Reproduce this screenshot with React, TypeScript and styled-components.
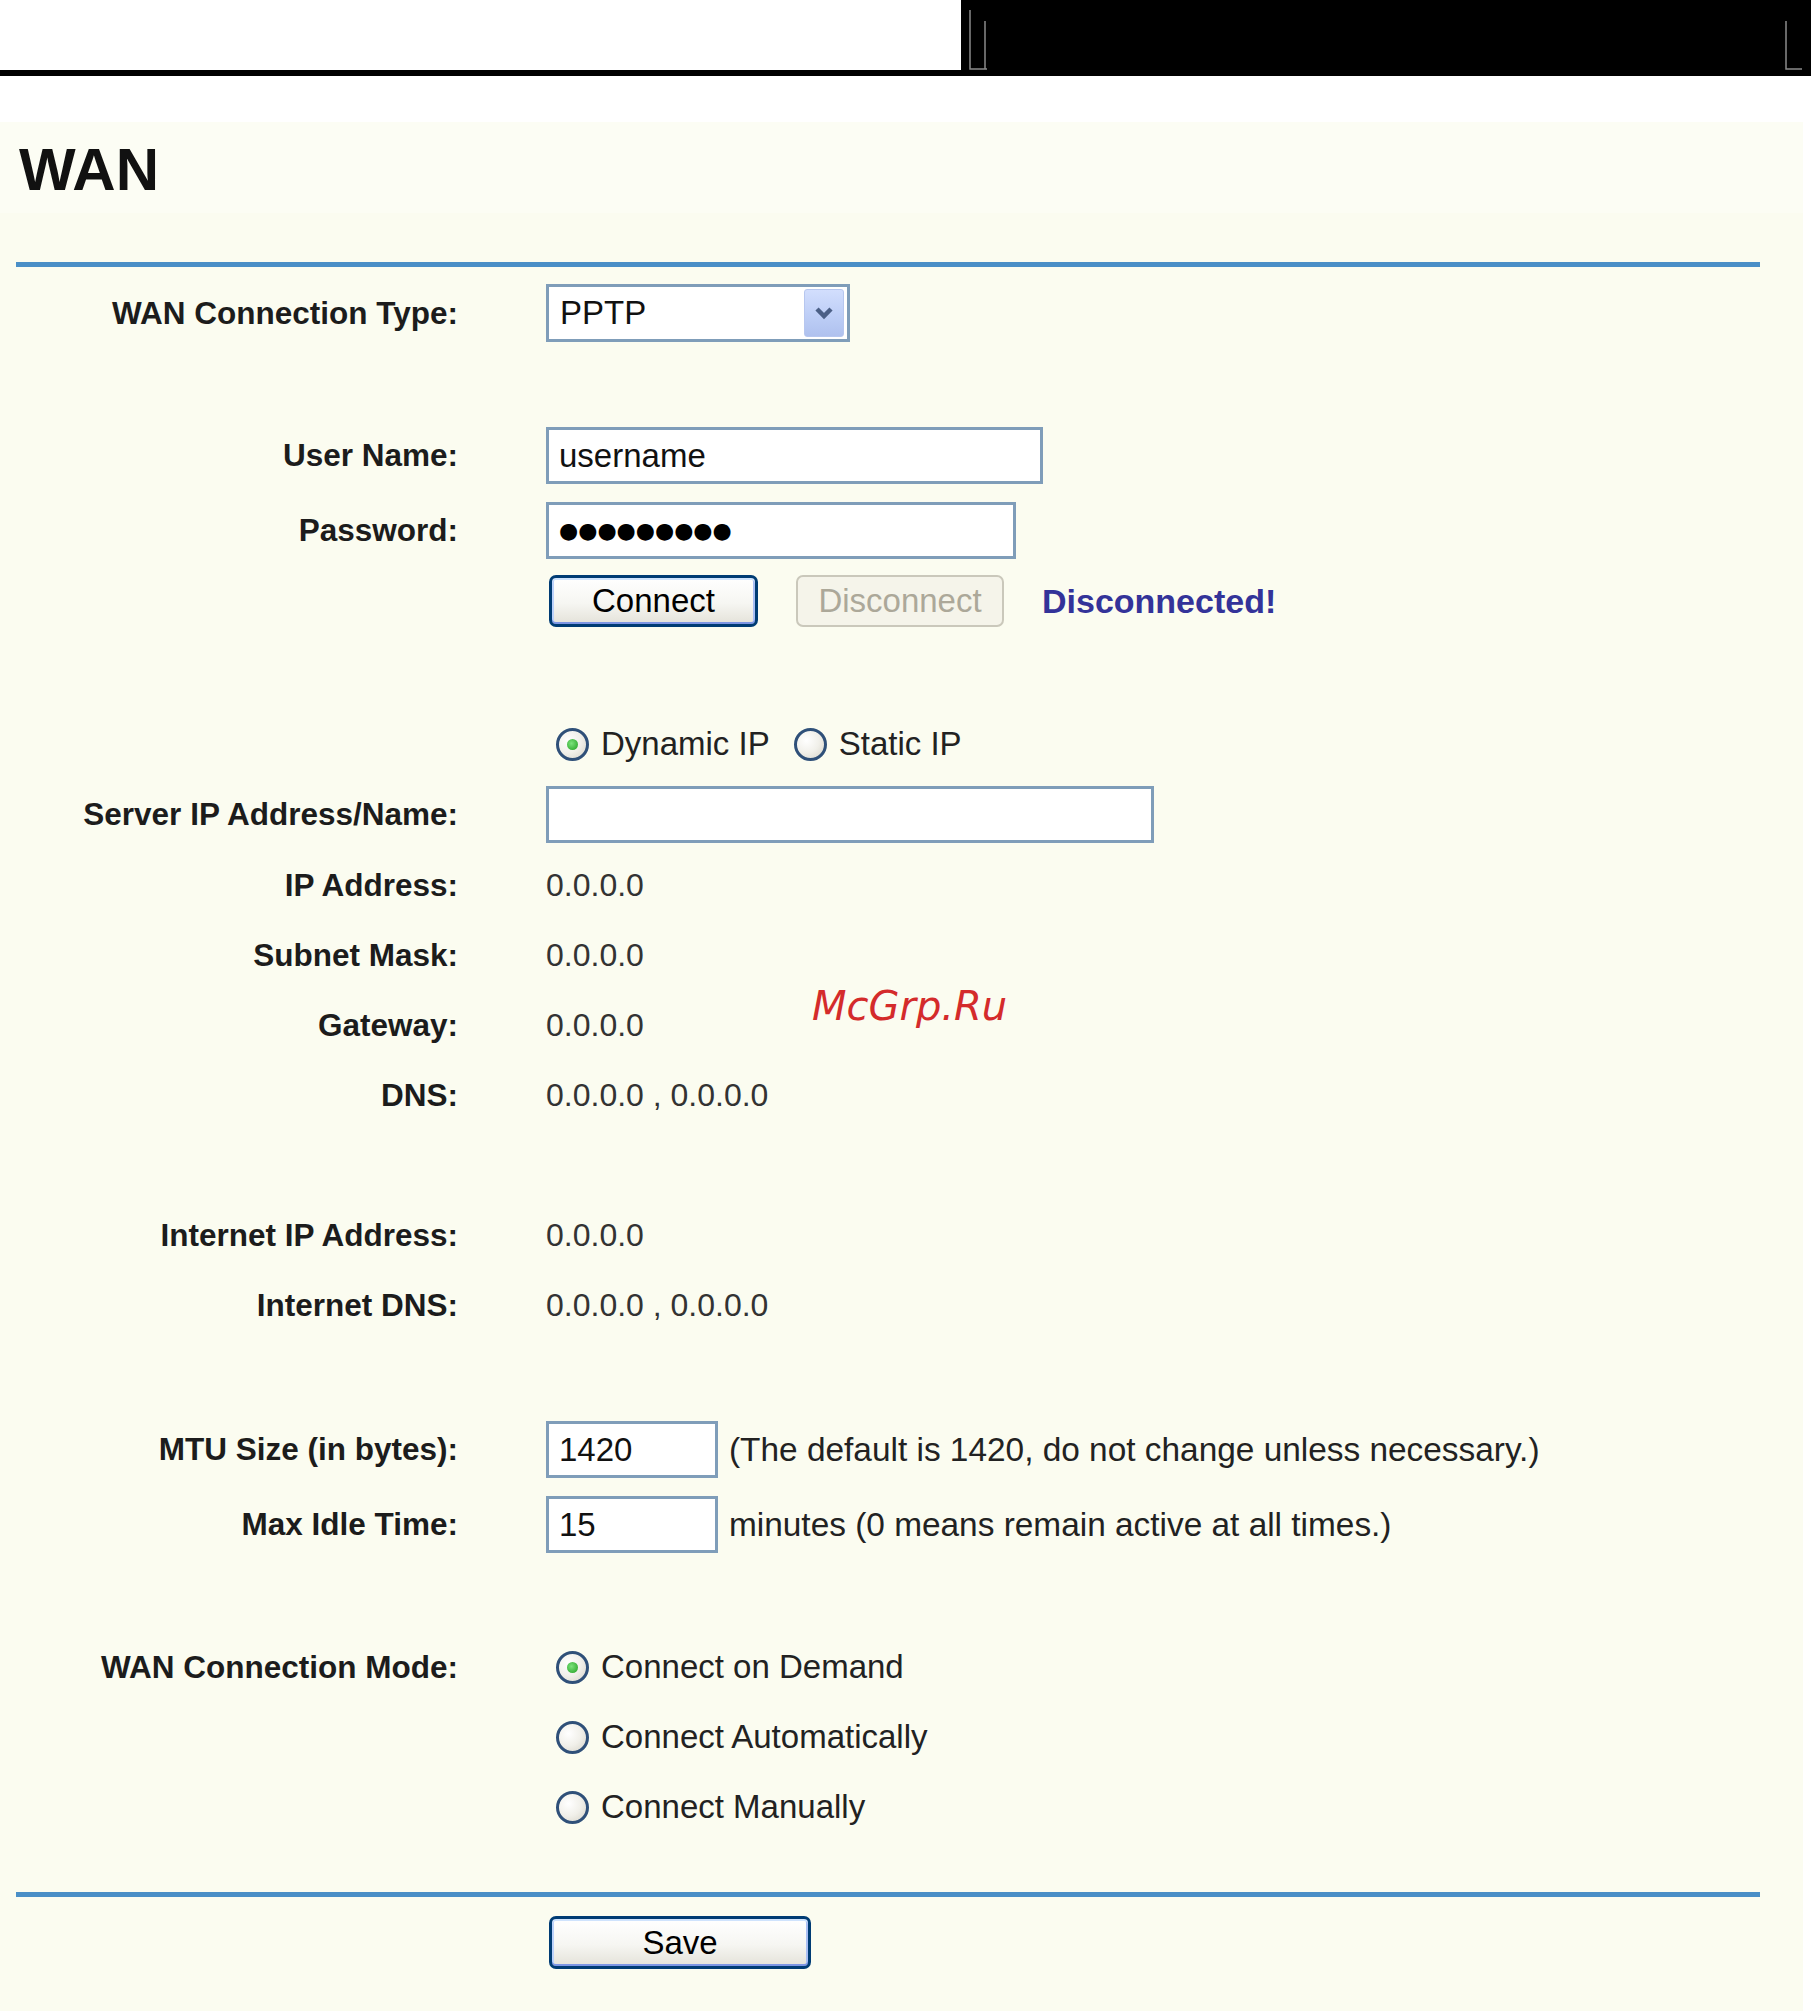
import styled, { createGlobalStyle, css } from 'styled-components';

const GlobalStyle = createGlobalStyle`
  html, body { margin: 0; padding: 0; background: #fff; }
  body { font-family: "Liberation Sans", Arial, sans-serif; }
`;

const Page = styled.div`
  position: relative;
  width: 1811px;
  min-height: 2011px;
  background: #fff;
  overflow: hidden;
`;

const Header = styled.header`
  display: flex;
  height: 70px;
  border-bottom: 6px solid #000;
`;

const HeaderBlank = styled.div`
  width: 961px;
  background: #fff;
`;

const HeaderBlack = styled.div`
  flex: 1;
  background: #000;
  svg { display: block; }
`;

const Panel = styled.main`
  width: 1803px;
  margin-top: 46px;
  background: #fbfcf0;
  padding-bottom: 60px;
`;

const TitleBar = styled.div`
  box-sizing: border-box;
  height: 91px;
  padding: 5px 0 0 19px;
  background: #fcfdf4;
`;

const Title = styled.h1`
  margin: 0;
  font: bold 60px/86px "Liberation Sans", Arial, sans-serif;
  color: #111;
`;

const Divider = styled.div<{ $top: number }>`
  margin: ${p => p.$top}px 0 0 16px;
  width: 1744px;
  height: 5px;
  background: #4a8fc7;
`;

const Spacer = styled.div<{ $h: number }>`
  height: ${p => p.$h}px;
`;

const Row = styled.div<{ $h: number }>`
  display: grid;
  grid-template-columns: 458px 1fr;
  column-gap: 88px;
  align-items: center;
  height: ${p => p.$h}px;
`;

const Label = styled.div`
  text-align: right;
  font: bold 31.5px "Liberation Sans", Arial, sans-serif;
  color: #1c1c1c;
  white-space: nowrap;
`;

const Cell = styled.div`
  display: flex;
  align-items: center;
  white-space: nowrap;
`;

const Value = styled.span`
  font-size: 32px;
  color: #333;
`;

const fieldCss = css`
  box-sizing: border-box;
  height: 57px;
  margin: 0;
  border: 3px solid #7f9db9;
  background: #fff;
  padding: 0 10px;
  font: 33px "Liberation Sans", Arial, sans-serif;
  color: #111;
  outline: none;
`;

const TextBox = styled.input<{ $w: number }>`
  ${fieldCss};
  width: ${p => p.$w}px;
`;

const PasswordBox = styled.div<{ $w: number }>`
  ${fieldCss};
  width: ${p => p.$w}px;
  display: flex;
  align-items: center;
  font: 22px "DejaVu Sans", sans-serif;
  color: #000;
`;

const SelectBox = styled.div`
  box-sizing: border-box;
  width: 304px;
  height: 58px;
  border: 3px solid #7f9db9;
  background: #fff;
  display: flex;
  align-items: center;
  justify-content: space-between;
  padding: 0 3px 0 11px;
  font: 33px "Liberation Sans", Arial, sans-serif;
  color: #111;
`;

const SelectArrow = styled.span`
  box-sizing: border-box;
  width: 40px;
  height: 48px;
  border-radius: 3px;
  border: 1px solid #b7c7ef;
  background: linear-gradient(180deg, #d2defd 0%, #bccdf6 60%, #afc1ee 100%);
  display: flex;
  align-items: center;
  justify-content: center;
`;

const Button = styled.button<{ $w: number; $h: number }>`
  box-sizing: border-box;
  width: ${p => p.$w}px;
  height: ${p => p.$h}px;
  margin: 0;
  padding: 0;
  border: 3px solid #003c74;
  border-radius: 7px;
  background: linear-gradient(180deg, #ffffff 0%, #f6f6f2 55%, #e4e2d9 100%);
  box-shadow: inset 0 2px 0 #cfe3fd, inset 0 -2px 0 #7d96e4, inset 2px 0 0 #bcd2fb, inset -2px 0 0 #a9bff4;
  font: 33px "Liberation Sans", Arial, sans-serif;
  color: #000;
  cursor: pointer;

  &:disabled {
    border: 2px solid #cac8bb;
    background: #f5f4ea;
    box-shadow: none;
    color: #aca899;
    cursor: default;
  }
`;

const ButtonRow = styled(Cell)`
  gap: 38px;
  padding-left: 3px;
`;

const Status = styled.span`
  font: bold 34px "Liberation Sans", Arial, sans-serif;
  color: #333399;
`;

const RadioGroup = styled.div<{ $gap: number }>`
  display: flex;
  align-items: center;
  gap: ${p => p.$gap}px;
  padding-left: 10px;
`;

const RadioItem = styled.label`
  display: flex;
  align-items: center;
  gap: 12px;
  font-size: 33px;
  color: #222;
  white-space: nowrap;
`;

const RadioDot = styled.span<{ $on?: boolean }>`
  box-sizing: border-box;
  flex: none;
  width: 33px;
  height: 33px;
  border-radius: 50%;
  border: 3px solid #2f5079;
  background: radial-gradient(circle at 35% 35%, #ffffff 0%, #f1f0ea 50%, #d6d3c8 100%);
  display: inline-flex;
  align-items: center;
  justify-content: center;

  &::after {
    content: '';
    width: 11px;
    height: 11px;
    border-radius: 50%;
    background: ${p => (p.$on ? 'radial-gradient(circle at 40% 40%, #7ce27c, #1f9e1f)' : 'transparent')};
  }
`;

const Hint = styled.span`
  margin-left: 11px;
  font-size: 33.4px;
  color: #222;
`;

const SaveRow = styled(Row)`
  margin-top: 19px;
  align-items: start;
`;

const Watermark = styled.div`
  position: absolute;
  left: 812px;
  top: 986px;
  font: italic 40px/1 "DejaVu Sans", sans-serif;
  color: #d42b2b;
  pointer-events: none;
`;

function Radio({ on, children }: { on?: boolean; children: string }) {
  return (
    <RadioItem>
      <RadioDot $on={on} />
      {children}
    </RadioItem>
  );
}

function InfoRow({ label, value }: { label: string; value: string }) {
  return (
    <Row $h={70}>
      <Label>{label}</Label>
      <Cell>
        <Value>{value}</Value>
      </Cell>
    </Row>
  );
}

export default function App() {
  return (
    <Page>
      <GlobalStyle />
      <Header>
        <HeaderBlank />
        <HeaderBlack>
          <svg width="850" height="70" viewBox="0 0 850 70">
            <g stroke="#8a8a8a" strokeWidth="1.5" fill="none">
              <path d="M9 10 V69 H26" />
              <path d="M24 21 V69" />
              <path d="M825 21 V69 H841" />
            </g>
          </svg>
        </HeaderBlack>
      </Header>

      <Panel>
        <TitleBar>
          <Title>WAN</Title>
        </TitleBar>
        <Divider $top={49} />

        <Spacer $h={11} />
        <Row $h={70}>
          <Label>WAN Connection Type:</Label>
          <Cell>
            <SelectBox>
              PPTP
              <SelectArrow>
                <svg width="20" height="14" viewBox="0 0 20 14">
                  <path d="M3 3 L10 10 L17 3" stroke="#4b5f86" strokeWidth="4.5" fill="none" />
                </svg>
              </SelectArrow>
            </SelectBox>
          </Cell>
        </Row>
        <Spacer $h={70} />

        <Row $h={75}>
          <Label>User Name:</Label>
          <Cell>
            <TextBox $w={497} readOnly value="username" />
          </Cell>
        </Row>
        <Row $h={75}>
          <Label>Password:</Label>
          <Cell>
            <PasswordBox $w={470}>●●●●●●●●●</PasswordBox>
          </Cell>
        </Row>
        <Row $h={66}>
          <div />
          <ButtonRow>
            <Button $w={209} $h={52}>Connect</Button>
            <Button $w={208} $h={52} disabled>Disconnect</Button>
            <Status>Disconnected!</Status>
          </ButtonRow>
        </Row>
        <Spacer $h={75} />

        <Row $h={70}>
          <div />
          <RadioGroup $gap={24}>
            <Radio on>Dynamic IP</Radio>
            <Radio>Static IP</Radio>
          </RadioGroup>
        </Row>
        <Row $h={71}>
          <Label>Server IP Address/Name:</Label>
          <Cell>
            <TextBox $w={608} readOnly value="" />
          </Cell>
        </Row>
        <InfoRow label="IP Address:" value="0.0.0.0" />
        <InfoRow label="Subnet Mask:" value="0.0.0.0" />
        <InfoRow label="Gateway:" value="0.0.0.0" />
        <InfoRow label="DNS:" value="0.0.0.0 , 0.0.0.0" />
        <Spacer $h={70} />
        <InfoRow label="Internet IP Address:" value="0.0.0.0" />
        <InfoRow label="Internet DNS:" value="0.0.0.0 , 0.0.0.0" />
        <Spacer $h={72} />

        <Row $h={75}>
          <Label>MTU Size (in bytes):</Label>
          <Cell>
            <TextBox $w={172} readOnly value="1420" />
            <Hint>(The default is 1420, do not change unless necessary.)</Hint>
          </Cell>
        </Row>
        <Row $h={75}>
          <Label>Max Idle Time:</Label>
          <Cell>
            <TextBox $w={172} readOnly value="15" />
            <Hint>minutes (0 means remain active at all times.)</Hint>
          </Cell>
        </Row>
        <Spacer $h={70} />

        <Row $h={70}>
          <Label>WAN Connection Mode:</Label>
          <RadioGroup $gap={0}>
            <Radio on>Connect on Demand</Radio>
          </RadioGroup>
        </Row>
        <Row $h={70}>
          <div />
          <RadioGroup $gap={0}>
            <Radio>Connect Automatically</Radio>
          </RadioGroup>
        </Row>
        <Row $h={70}>
          <div />
          <RadioGroup $gap={0}>
            <Radio>Connect Manually</Radio>
          </RadioGroup>
        </Row>

        <Divider $top={50} />
        <SaveRow $h={53}>
          <div />
          <ButtonRow>
            <Button $w={262} $h={53}>Save</Button>
          </ButtonRow>
        </SaveRow>
      </Panel>

      <Watermark>McGrp.Ru</Watermark>
    </Page>
  );
}
